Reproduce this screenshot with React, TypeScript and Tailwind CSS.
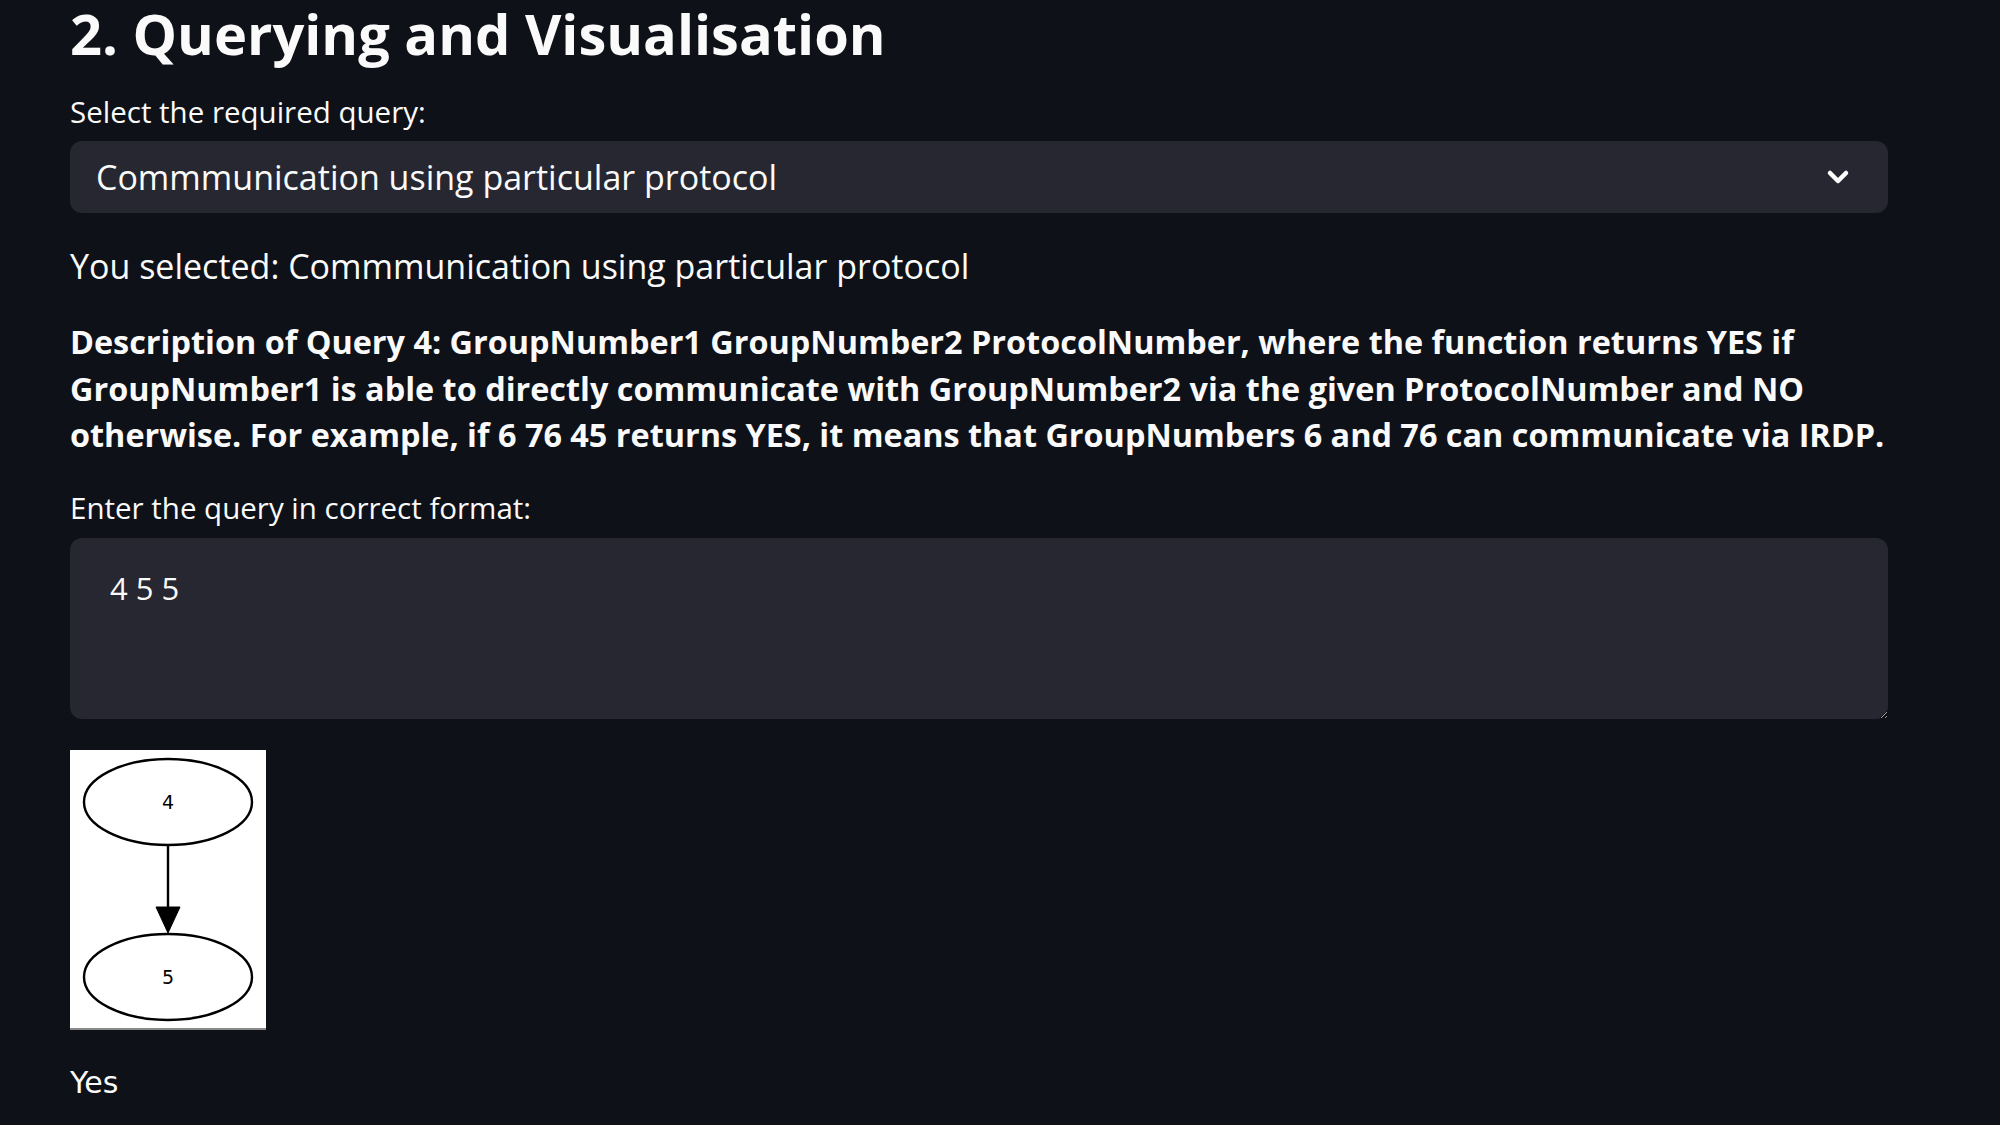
import { ChevronDown } from 'lucide-react';

function QueryGraph() {
    return (
        <div className="w-[196px] h-[280px] bg-white border-b-2 border-[#8a8a8a]">
            <svg width="196" height="278" viewBox="0 0 196 278">
                <ellipse cx="98" cy="52" rx="84" ry="43" fill="none" stroke="#000" strokeWidth="2.4" />
                <text x="98" y="59" textAnchor="middle" fontSize="19" fontFamily="DejaVu Sans, sans-serif" fill="#000">4</text>
                <line x1="98" y1="96" x2="98" y2="160" stroke="#000" strokeWidth="2.4" />
                <polygon points="86,157 110,157 98,183" fill="#000" stroke="#000" strokeWidth="1" />
                <ellipse cx="98" cy="227" rx="84" ry="43" fill="none" stroke="#000" strokeWidth="2.4" />
                <text x="98" y="234" textAnchor="middle" fontSize="19" fontFamily="DejaVu Sans, sans-serif" fill="#000">5</text>
            </svg>
        </div>
    );
}

export default function App() {
    return (
        <div className="min-h-screen w-full bg-[#0e1117] text-[#fafafa] font-['Open_Sans',sans-serif] overflow-hidden">
            <div className="ml-[70px] w-[1818px] flex flex-col">

                {/* Heading */}
                <h2 className="leading-[66px] text-[56px] font-bold">2. Querying and Visualisation</h2>

                {/* Query select */}
                <label className="mt-[27px] h-[38px] leading-[38px] text-[29.5px]">Select the required query:</label>
                <div className="mt-[10px] h-[72px] rounded-[12px] bg-[#262730] flex items-center justify-between pl-[26px] pr-[34px]">
                    <span className="text-[34px]">Commmunication using particular protocol</span>
                    <ChevronDown className="w-[32px] h-[32px] text-white" strokeWidth={3.4} />
                </div>

                <p className="mt-[32px] h-[42px] leading-[42px] text-[34px]">You selected: Commmunication using particular protocol</p>

                {/* Description */}
                <p className="mt-[31px] text-[32.4px] font-bold leading-[46.5px]">
                    <span className="block whitespace-nowrap">Description of Query 4: GroupNumber1 GroupNumber2 ProtocolNumber, where the function returns YES if</span>
                    <span className="block whitespace-nowrap">GroupNumber1 is able to directly communicate with GroupNumber2 via the given ProtocolNumber and NO</span>
                    <span className="block whitespace-nowrap">otherwise. For example, if 6 76 45 returns YES, it means that GroupNumbers 6 and 76 can communicate via IRDP.</span>
                </p>

                {/* Query input */}
                <label className="mt-[31px] h-[38px] leading-[38px] text-[29.5px]">Enter the query in correct format:</label>
                <textarea
                    className="mt-[11px] h-[181px] w-full rounded-[12px] bg-[#262730] text-[#fafafa] text-[31px] leading-[40px] pl-[40px] pt-[30px] outline-none resize-y font-['Open_Sans',sans-serif]"
                    defaultValue="4 5 5"
                />

                {/* Graph output */}
                <div className="mt-[31px]">
                    <QueryGraph />
                </div>

                <p className="mt-[35px] h-[36px] leading-[36px] text-[30px] font-['DejaVu_Sans',sans-serif]">Yes</p>
            </div>
        </div>
    );
}
